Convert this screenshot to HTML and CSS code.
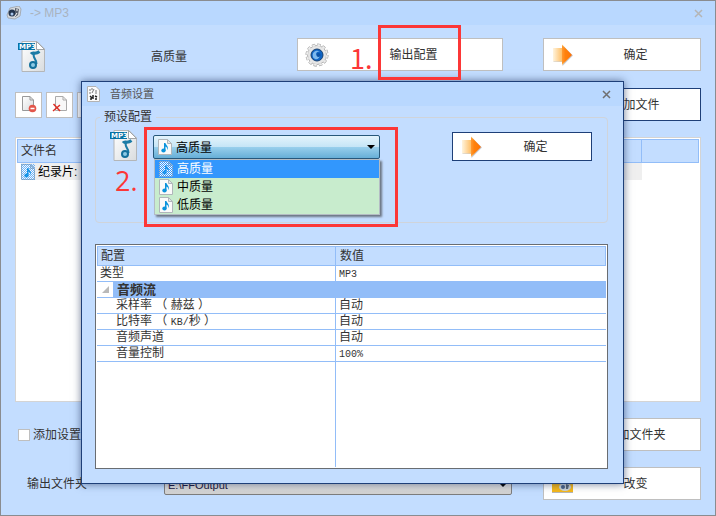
FILE: index.html
```html
<!DOCTYPE html>
<html lang="zh-CN">
<head>
  <meta charset="UTF-8">
  <title>-> MP3</title>
  <meta name="viewport" content="width=device-width, initial-scale=1.0">
  <link rel="stylesheet" href="styles.css">
</head>
<body>

  <!-- shared icons -->
  <svg class="defs" width="0" height="0" aria-hidden="true">
    <defs>
      <linearGradient id="paper" x1="0" y1="0" x2="1" y2="1">
        <stop offset="0" stop-color="#ffffff"/>
        <stop offset="1" stop-color="#d9dcde"/>
      </linearGradient>
      <linearGradient id="orange" x1="0" y1="0" x2="1" y2="0">
        <stop offset="0" stop-color="#fff4de"/>
        <stop offset="0.5" stop-color="#ffbd62"/>
        <stop offset="0.65" stop-color="#ff8a12"/>
        <stop offset="1" stop-color="#ff6a00"/>
      </linearGradient>
      <pattern id="checker" width="2" height="2" patternUnits="userSpaceOnUse">
        <rect width="1" height="1" fill="#3297fd"/>
        <rect x="1" y="1" width="1" height="1" fill="#3297fd"/>
      </pattern>
    </defs>
    <symbol id="icon-mp3" viewBox="0 0 28 33">
      <path d="M4 1.500H19L26.500 9V31.500H4Z" fill="url(#paper)" stroke="#b4b6b8"/>
      <path d="M18.500 1.500V9.500H26.500Z" fill="#fff" stroke="#a3a5a7"/>
      <path d="M13 14C15 11.500 17 15 21.500 11.500" fill="none" stroke="#1b7ba6" stroke-width="3"/>
      <path d="M16 13.500C14 18 19 19 18.500 24" fill="none" stroke="#1b7ba6" stroke-width="2"/>
      <circle cx="15" cy="25" r="3" fill="#8cc9e4" stroke="#14709b" stroke-width="2"/>
      <rect x="0" y="3" width="17" height="7" fill="#0872a4"/>
    </symbol>
    <symbol id="icon-note" viewBox="0 0 14 16">
      <path d="M0.500 0.500H9.500L13.500 4.500V15.500H0.500Z" fill="#fafafa" stroke="#b0b6ba"/>
      <path d="M9.500 0.500V4.500H13.500Z" fill="#e2e5e7" stroke="#b0b6ba"/>
      <path d="M6 4H7.500C7.500 6 11 7 9.500 10.500H9C9.500 8.500 8.500 8 7.500 7.500V11.500H6Z" fill="#0a93dc"/>
      <ellipse cx="5.500" cy="11.500" rx="2.200" ry="2" fill="#0a93dc"/>
    </symbol>
    <symbol id="icon-arrow" viewBox="0 0 24 24">
      <path d="M2.500 6H11.500V2L22 12.500L11.500 23V19H2.500Z" fill="#8f99aa" opacity="0.5"/>
      <path d="M2 5H11V1.500L21 12L11 22V18.500H2Z" fill="url(#orange)"/>
      <path d="M11 2.500L20 12L11 21Z" fill="#ff7b08" opacity="0.6"/>
    </symbol>
    <symbol id="icon-gear" viewBox="0 0 24 24">
      <circle cx="12" cy="12" r="10" fill="none" stroke="#9a9a9a" stroke-width="3" stroke-dasharray="3.200 2.030"/>
      <circle cx="12" cy="12" r="9.500" fill="#e6e6e6" stroke="#b5b5b5"/>
      <circle cx="12" cy="12" r="10" fill="none" stroke="#ededed" stroke-width="2" stroke-dasharray="2.600 2.630" stroke-dashoffset="-0.300"/>
      <circle cx="12" cy="12" r="6" fill="#0f64c4" stroke="#17406f"/>
      <path d="M8 14C6.500 9 11 6.500 15 8.500C12 8.500 10.500 10 11.500 12C12 13.500 14 13 15 12C15 15 12 17 10 16C9 15.500 8.300 15 8 14Z" fill="#7db9ee"/>
      <circle cx="13.500" cy="12" r="2" fill="#0b52a6"/>
    </symbol>
  </svg>

  <div class="window">
    <div class="titlebar">
      <svg class="app-icon" viewBox="0 0 16 14">
        <path d="M1 9L4 2L13 0L15 3L14 10L9 13L2 12Z" fill="#d5d9de" stroke="#a5acb5"/>
        <circle cx="6" cy="7" r="3.500" fill="#25364f"/>
        <circle cx="6" cy="8" r="1.500" fill="#a9c7ed"/>
        <path d="M9 2L13 3L12 9L9 11Z" fill="#59616e"/>
        <path d="M10 4L12 4M11 7L9 10" stroke="#fff"/>
      </svg>
      <span>-&gt; MP3</span>
      <button class="close" aria-label="关闭"><svg viewBox="0 0 9 9"><path d="M1 1L8 8M8 1L1 8"/></svg></button>
    </div>

    <div class="content">
      <div class="row top-row">
        <svg class="mp3-icon" viewBox="0 0 28 33"><use href="#icon-mp3"/><text x="1" y="9">MP3</text></svg>
        <span class="quality">高质量</span>
        <button class="btn config-btn"><svg><use href="#icon-gear"/></svg><span>输出配置</span></button>
        <button class="btn side-btn"><svg><use href="#icon-arrow"/></svg><span>确定</span></button>
      </div>

      <div class="row">
        <div class="tools">
          <button class="tool" aria-label="移除">
            <svg viewBox="0 0 16 17">
              <path d="M1.500 0.500H9L12.500 4V14.500H1.500Z" fill="url(#paper)" stroke="#999"/>
              <path d="M9 0.500V4H12.500" fill="none" stroke="#999"/>
              <circle cx="11.500" cy="12.500" r="3.800" fill="#e2564b"/>
              <path d="M9.500 12.500H13.500" stroke="#fff" stroke-width="1.500"/>
            </svg>
          </button>
          <button class="tool" aria-label="清空列表">
            <svg viewBox="0 0 16 17">
              <path d="M3.500 0.500H11L14.500 4V14.500H3.500Z" fill="#f8f8f8" stroke="#aaa"/>
              <path d="M11 0.500V4H14.500" fill="none" stroke="#aaa"/>
              <path d="M1.500 8L8 15M8 9L1 15" stroke="#dc2f25" stroke-width="1.500"/>
            </svg>
          </button>
          <button class="tool" aria-label="播放"></button>
        </div>
        <button class="btn side-btn primary"><svg></svg><span>添加文件</span></button>
      </div>

      <div class="file-list">
        <table>
          <thead>
            <tr><th>文件名</th><th class="state"></th></tr>
          </thead>
          <tbody>
            <tr>
              <td>
                <div class="file">
                  <svg class="note-icon" viewBox="0 0 14 16"><use href="#icon-note"/><rect width="14" height="16" fill="url(#checker)" opacity="0.7"/></svg>
                  <span>纪录片:</span>
                </div>
              </td>
              <td></td>
            </tr>
          </tbody>
        </table>
      </div>

      <div class="row">
        <label class="check"><input type="checkbox">添加设置</label>
        <button class="btn side-btn"><svg></svg><span>添加文件夹</span></button>
      </div>

      <div class="row">
        <label class="out-label" for="output">输出文件夹</label>
        <div class="output">
          <select id="output">
            <option>E:\FFOutput</option>
          </select>
        </div>
        <button class="btn side-btn">
          <svg viewBox="0 0 24 24">
            <path d="M1 3H9L11 6H22V20H1Z" fill="#f5b81c"/>
            <path d="M1 20H22V21H1Z" fill="#b7b7b7"/>
            <ellipse cx="14" cy="15" rx="6" ry="4" fill="#cbd2d9"/>
            <circle cx="12" cy="15" r="2" fill="#4a6386"/>
            <path d="M15 12L18 13L17 17L15 17Z" fill="#5b6775"/>
          </svg>
          <span>改变</span>
        </button>
      </div>
    </div>
  </div>

  <div class="dialog" role="dialog" aria-labelledby="dialog-title">
    <div class="titlebar">
      <svg class="doc-icon" viewBox="0 0 13 16">
        <path d="M0.500 0.500H9L12.500 4V15.500H0.500Z" fill="#fbfbfb" stroke="#b3b3b3"/>
        <path d="M3 3V5M5 2V4M7 3L5 7M9 4V6M3 6V8M8 7H10" stroke="#777"/>
        <path d="M3 10L5 12M6 9V13M8 10L10 11M3 13H5M8 13H10" stroke="#222" stroke-width="1.500"/>
      </svg>
      <span id="dialog-title">音频设置</span>
      <button class="close" aria-label="关闭"><svg viewBox="0 0 9 9"><path d="M1 1L8 8M8 1L1 8"/></svg></button>
    </div>

    <div class="dialog-body">
      <fieldset class="preset">
        <legend>预设配置</legend>
        <div class="preset-row">
          <svg class="mp3-icon" viewBox="0 0 28 33"><use href="#icon-mp3"/><text x="1" y="9">MP3</text></svg>
          <div class="combo">
            <select class="combo-box" aria-label="预设配置">
              <option>高质量</option>
              <option>中质量</option>
              <option>低质量</option>
            </select>
            <svg class="note-icon"><use href="#icon-note"/></svg>
            <ul class="combo-list">
              <li class="selected">
                <svg class="note-icon" viewBox="0 0 14 16"><use href="#icon-note"/><rect width="14" height="16" fill="url(#checker)"/></svg>高质量
              </li>
              <li><svg class="note-icon"><use href="#icon-note"/></svg>中质量</li>
              <li><svg class="note-icon"><use href="#icon-note"/></svg>低质量</li>
            </ul>
          </div>
          <button class="btn ok-btn primary"><svg><use href="#icon-arrow"/></svg><span>确定</span></button>
        </div>
      </fieldset>

      <div class="settings">
        <table>
          <thead>
            <tr><th>配置</th><th>数值</th></tr>
          </thead>
          <tbody>
            <tr><td>类型</td><td><span class="mono">MP3</span></td></tr>
            <tr class="group"><td colspan="2"><div><button class="expander" aria-label="折叠"><svg viewBox="0 0 7 7"><path d="M7 0V7H0Z" fill="#b9b9b9"/></svg></button>音频流</div></td></tr>
            <tr class="item"><td>采样率 （ 赫兹 ）</td><td>自动</td></tr>
            <tr class="item"><td>比特率 （ <span class="mono">KB/</span>秒 ）</td><td>自动</td></tr>
            <tr class="item"><td>音频声道</td><td>自动</td></tr>
            <tr class="item"><td>音量控制</td><td><span class="mono">100%</span></td></tr>
            <tr class="filler"><td></td><td></td></tr>
          </tbody>
        </table>
      </div>
    </div>
  </div>

  <!-- step markers -->
  <div class="mark mark-1"></div>
  <div class="step step-1">1.</div>
  <div class="mark mark-2"></div>
  <div class="step step-2">2.</div>

</body>
</html>
```

FILE: styles.css
```css
* {
  box-sizing: border-box;
}

body {
  margin: 0;
  position: relative;
  min-height: 100vh;
  font-family: "Liberation Sans", "Noto Sans CJK SC", sans-serif;
  font-size: 12px;
  line-height: 16px;
  color: #333;
}

button, select, input {
  font: inherit;
  color: inherit;
  margin: 0;
}

svg {
  display: block;
  flex: none;
}

.defs {
  position: absolute;
}

.window {
  display: flex;
  flex-direction: column;
  min-height: 100vh;
  border: 1px solid #8a8c90;
  background: #c3ddff;
}

.titlebar {
  display: flex;
  align-items: center;
  height: 24px;
  padding: 0 12px 0 5px;
  background: #b9d8ff;
  color: #a9b3c0;
}

.app-icon {
  width: 16px;
  height: 14px;
  margin-right: 8px;
}

.close {
  margin-left: auto;
  padding: 0;
  border: none;
  background: none;
}

.close svg {
  width: 9px;
  height: 9px;
  fill: none;
  stroke: #b5b5b5;
  stroke-width: 1.5;
}

.content {
  flex: 1;
  display: flex;
  flex-direction: column;
  gap: 16px;
  padding: 13px 14px 15px;
}

.row {
  display: flex;
  align-items: center;
  height: 33px;
}

.top-row {
  margin-bottom: 1px;
}

.mp3-icon {
  width: 28px;
  height: 33px;
}

.mp3-icon text {
  font-family: "DejaVu Sans", sans-serif;
  font-size: 7px;
  font-weight: bold;
  fill: #fff;
}

.row .mp3-icon {
  margin: 4px 0 0 3px;
}

.quality {
  width: 146px;
  margin: 0 0 0 auto;
  padding-top: 4px;
}

.btn {
  display: flex;
  align-items: center;
  height: 33px;
  padding: 0 0 0 7px;
  border: 1px solid #bfbfbf;
  background: #fff;
}

.btn svg {
  width: 24px;
  height: 24px;
  margin-right: -4px;
}

.btn span {
  flex: 1;
  text-align: center;
}

.btn.primary {
  border-color: #1e3f78;
}

.config-btn {
  width: 206px;
}

.side-btn {
  width: 158px;
  margin-left: auto;
}

.row .config-btn + .side-btn {
  margin-left: 40px;
}

.tools {
  display: flex;
  gap: 4px;
}

.tool {
  display: flex;
  align-items: center;
  justify-content: center;
  width: 27px;
  height: 26px;
  padding: 0;
  border: 1px solid #bfbfbf;
  background: #fff;
}

.tool svg {
  width: 16px;
  height: 17px;
}

.file-list {
  flex: 1;
  padding: 1px;
  border: 1px solid #d4d4d4;
  background: #fff;
}

table {
  width: 100%;
  border-collapse: separate;
  border-spacing: 0;
  table-layout: fixed;
}

th, td {
  padding: 0 4px;
  text-align: left;
  font-weight: normal;
}

th {
  padding-left: 3px;
  background: #c3ddff;
  border: 1px solid #92bdf8;
}

th + th {
  padding-left: 4px;
  border-left: none;
}

.file-list th {
  height: 24px;
}

.file-list .state {
  width: 57px;
}

.file-list td {
  padding: 0 0 0 4px;
}

.file {
  display: flex;
  align-items: center;
  gap: 3px;
  height: 17px;
  background: #efefef;
  color: #000;
}

.note-icon {
  width: 14px;
  height: 16px;
}

.check {
  display: flex;
  align-items: center;
  gap: 3px;
  padding-left: 3px;
}

.check input {
  appearance: none;
  width: 12px;
  height: 12px;
  border: 1px solid #bfbfbf;
  background: #fff;
}

.out-label {
  width: 149px;
  padding-left: 12px;
}

.output {
  position: relative;
  flex: 1;
  margin-right: 31px;
}

.output select {
  appearance: none;
  display: block;
  width: 100%;
  height: 22px;
  padding: 2px 3px 0;
  border: 1px solid #7d7d7d;
  border-radius: 2px;
  background: linear-gradient(#f2f2f2, #d0d0d0);
  color: #1c1840;
  font-size: 11px;
}

.output::after,
.combo::after {
  content: "";
  position: absolute;
  top: 10px;
  right: 5px;
  border: 4px solid transparent;
  border-top-color: #000;
  border-bottom: none;
  pointer-events: none;
}

.row .output + .side-btn {
  margin-left: 0;
}

/* dialog over the main window */
.dialog {
  position: absolute;
  top: 81px;
  right: 92px;
  bottom: 32px;
  left: 81px;
  display: flex;
  flex-direction: column;
  border: 1px solid #1e3f78;
  background: #c3ddff;
  box-shadow: 0 0 8px rgba(20, 40, 80, 0.6);
}

.dialog .titlebar {
  color: #555;
  font-size: 11px;
}

.dialog .close svg {
  stroke: #707070;
}

.doc-icon {
  width: 13px;
  height: 16px;
  margin-right: 10px;
}

.dialog-body {
  flex: 1;
  min-height: 0;
  display: flex;
  flex-direction: column;
  gap: 21px;
  padding: 3px 15px 14px 13px;
}

.preset {
  height: 114px;
  margin: 0;
  padding: 0 15px 0 14px;
  border: 1px solid #d0d4da;
  border-radius: 4px;
}

.preset legend {
  margin-left: -10px;
  padding: 0 4px;
}

.preset-row {
  display: flex;
  align-items: flex-start;
  padding-top: 4px;
}

.combo {
  position: relative;
  width: 227px;
  margin: 6px 0 0 15px;
  color: #000;
}

.combo-box {
  appearance: none;
  display: block;
  width: 100%;
  height: 24px;
  padding: 2px 0 0 22px;
  border: 1px solid #28587a;
  border-radius: 2px;
  background: linear-gradient(#e4f4fc, #c5e5f6 50%, #98cfec 51%, #67afd7);
}

.combo > .note-icon {
  position: absolute;
  top: 4px;
  left: 5px;
}

.combo-list {
  position: absolute;
  top: 24px;
  left: 1px;
  right: 0;
  margin: 0;
  padding: 0;
  list-style: none;
  background: #c8eccd;
  border: 1px solid #b4bcc4;
  box-shadow: 2px 2px 2px #6d7684;
}

.combo-list li {
  display: flex;
  align-items: center;
  gap: 4px;
  height: 18px;
  padding-left: 4px;
}

.combo-list .selected {
  background: #3297fd;
  color: #fff;
}

.ok-btn {
  width: 140px;
  height: 29px;
  margin: 3px 0 0 auto;
}

.settings {
  flex: 1;
  min-height: 0;
  padding: 1px;
  border: 1px solid #696d72;
  background: #fff;
}

.settings table {
  height: 100%;
}

.settings th {
  height: 20px;
  line-height: 18px;
}

.settings th:first-child {
  width: 239px;
}

.settings td {
  height: 16px;
  padding: 0 3px;
  line-height: 15px;
  border-bottom: 1px solid #92bdf8;
}

.settings td:first-child {
  border-right: 1px solid #92bdf8;
}

.settings .item td:first-child {
  padding-left: 19px;
}

.settings .group td {
  padding: 0;
  background: #92bdf8;
  font-size: 13px;
  font-weight: bold;
}

.group div {
  display: flex;
  gap: 4px;
  height: 15px;
}

.expander {
  display: flex;
  align-items: center;
  justify-content: center;
  width: 16px;
  padding: 0;
  border: none;
  background: #fff;
}

.expander svg {
  width: 7px;
  height: 7px;
}

.settings .filler td {
  height: 100%;
  border-bottom: none;
}

.mono {
  font-family: "Liberation Mono", monospace;
  font-size: 10px;
  line-height: 10px;
}

/* red frames and step numbers */
.mark {
  position: absolute;
  border: 3px solid #fc3737;
  pointer-events: none;
}

.mark-1 {
  top: 25px;
  left: 378px;
  width: 83px;
  height: 55px;
}

.mark-2 {
  top: 127px;
  left: 144px;
  width: 254px;
  height: 100px;
}

.step {
  position: absolute;
  color: #fc3737;
  font-size: 27px;
  line-height: 32px;
}

.step-1 {
  top: 42px;
  left: 350px;
  font-family: "Noto Sans CJK SC", sans-serif;
}

.step-2 {
  top: 165px;
  left: 115px;
  font-family: "Open Sans", sans-serif;
}
```
